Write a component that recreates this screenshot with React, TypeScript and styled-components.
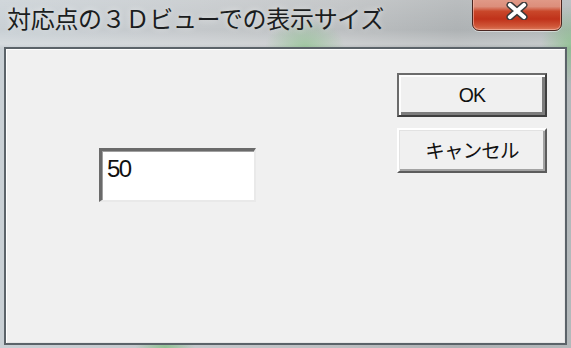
import React from "react";
import styled, { createGlobalStyle } from "styled-components";

const Global = createGlobalStyle`
  html, body { margin: 0; padding: 0; background: #b9c2c8; }
  body { width: 571px; height: 348px; overflow: hidden; }
`;

const Window = styled.div`
  width: 571px;
  height: 348px;
  box-sizing: border-box;
  display: flex;
  flex-direction: column;
  padding: 0 4px 3px 4px;
  overflow: hidden;
  background:
    radial-gradient(ellipse 40px 30px at 305px 48px, rgba(120, 190, 120, 0.55), rgba(120, 190, 120, 0) 100%),
    radial-gradient(ellipse 30px 40px at 571px 45px, rgba(120, 190, 120, 0.6), rgba(120, 190, 120, 0) 100%),
    radial-gradient(ellipse 30px 20px at 165px 348px, rgba(110, 190, 110, 0.6), rgba(110, 190, 110, 0) 100%),
    linear-gradient(180deg, rgba(255, 255, 255, 0.15) 0px, rgba(255, 255, 255, 0) 30px, rgba(255, 255, 255, 0.25) 44px, rgba(255, 255, 255, 0) 48px),
    linear-gradient(90deg, #c9d0d5 0%, #c4c8cb 35%, #bcbfc1 60%, #aeb2b4 80%, #b3b9bb 100%);
`;

const TitleBar = styled.div`
  height: 47px;
  flex: none;
  display: flex;
  align-items: flex-start;
  padding-left: 3px;
`;

const Title = styled.div`
  padding-top: 0;
  font-family: "Noto Sans CJK JP", "Noto Sans CJK SC", sans-serif;
  font-size: 24px;
  line-height: 35px;
  letter-spacing: -0.3px;
  color: #1b1d20;
  text-shadow: 0 0 6px rgba(255, 255, 255, 0.6);
  white-space: nowrap;
`;

const CloseButton = styled.div`
  margin-left: auto;
  margin-right: 5px;
  margin-top: -10px;
  width: 90px;
  height: 41px;
  box-sizing: border-box;
  border: 1px solid #4a2620;
  border-radius: 0 0 7px 7px;
  box-shadow: inset 0 0 0 1px rgba(255, 200, 185, 0.55), 0 1px 0 rgba(255, 255, 255, 0.45);
  background: linear-gradient(
    180deg,
    #e6a897 0%,
    #dc8e7b 40%,
    #c9472a 52%,
    #c0321a 72%,
    #cf5638 90%,
    #db7a5d 100%
  );
  display: flex;
  align-items: center;
  justify-content: center;
  padding-top: 1px;
`;

const Client = styled.div`
  flex: 1;
  display: flex;
  align-items: flex-start;
  padding: 24px 18px 0 93px;
  background: #f0f0f0;
  border: 2px solid #5b6369;
  box-shadow: inset 1px 1px 0 #ffffff, inset -1px -1px 0 #e6e6e6;
  box-sizing: border-box;
`;

const TextField = styled.input`
  margin-top: 75px;
  width: 157px;
  height: 54px;
  box-sizing: border-box;
  border-style: solid;
  border-width: 3px 2px 2px 3px;
  border-color: #6a6a6a #e9e9e9 #e9e9e9 #6a6a6a;
  box-shadow: inset 1px 1px 0 #a0a0a0;
  background: #ffffff;
  padding: 0 0 13px 5px;
  font-family: "Liberation Sans", Arial, sans-serif;
  font-size: 24px;
  letter-spacing: -1.5px;
  color: #111;
  outline: none;
`;

const ButtonColumn = styled.div`
  margin-left: auto;
  display: flex;
  flex-direction: column;
  gap: 11px;
`;

const Button = styled.button<{ $default?: boolean; $h: number }>`
  width: 150px;
  height: ${(p) => p.$h}px;
  box-sizing: border-box;
  background: #f0f0f0;
  font-family: "Liberation Sans", "Noto Sans CJK JP", sans-serif;
  font-size: 19.5px;
  letter-spacing: -0.8px;
  color: #111;
  padding: 0 0 ${(p) => (p.$default ? 0 : 3)}px 0;
  border-style: solid;
  border-width: 2px;
  border-color: ${(p) =>
    p.$default ? "#6b6b6b #3f3f3f #3f3f3f #6b6b6b" : "#ffffff #5c5c5c #5c5c5c #ffffff"};
  box-shadow: ${(p) =>
    p.$default
      ? "inset 2px 2px 0 #fdfdfd, inset -3px -3px 0 #7d7d7d"
      : "inset 1px 1px 0 #e2e2e2, inset -2px -2px 0 #a3a3a3"};
`;

function CloseGlyph() {
  return (
    <svg width="24" height="18" viewBox="0 0 24 18">
      <path d="M5 3 L19 15 M19 3 L5 15" stroke="#3a3a3a" strokeWidth="7" strokeLinecap="round" fill="none" />
      <path d="M5 3 L19 15 M19 3 L5 15" stroke="#ffffff" strokeWidth="4.2" strokeLinecap="round" fill="none" />
    </svg>
  );
}

export default function App() {
  return (
    <>
      <Global />
      <Window>
        <TitleBar>
          <Title>対応点の３Ｄビューでの表示サイズ</Title>
          <CloseButton>
            <CloseGlyph />
          </CloseButton>
        </TitleBar>
        <Client>
          <TextField value="50" readOnly />
          <ButtonColumn>
            <Button $default $h={44}>OK</Button>
            <Button $h={45}>キャンセル</Button>
          </ButtonColumn>
        </Client>
      </Window>
    </>
  );
}
